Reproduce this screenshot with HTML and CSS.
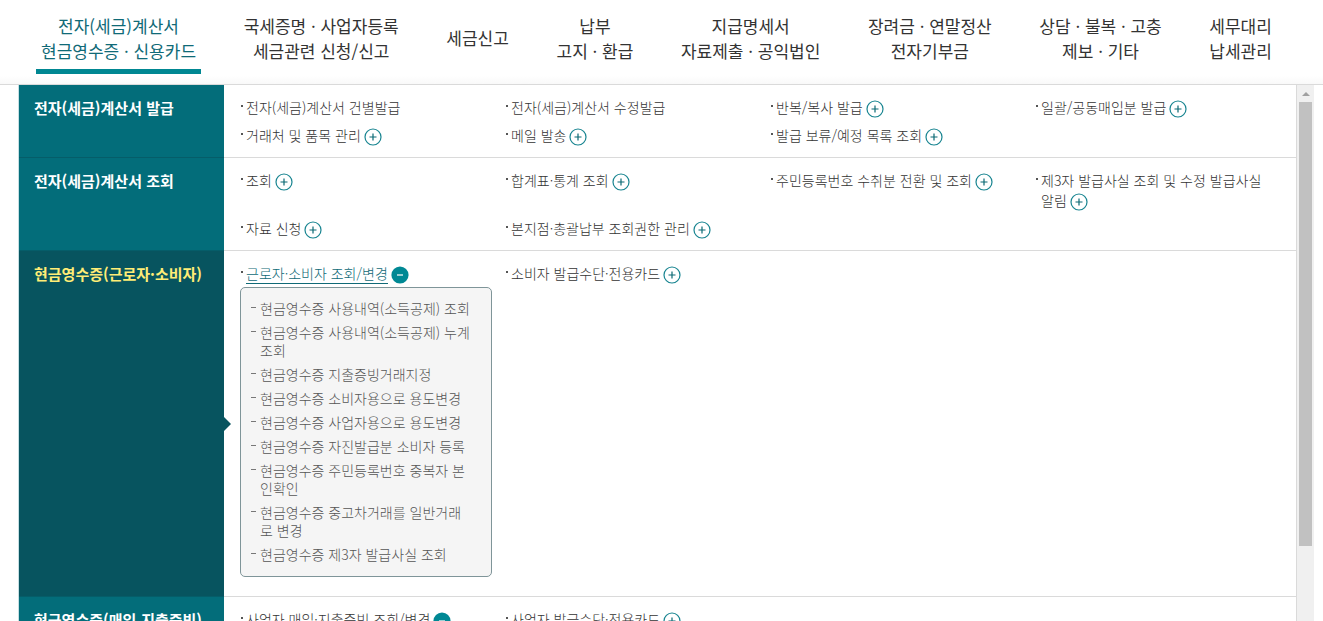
FILE: index.html
```html
<!DOCTYPE html>
<html lang="ko">
<head>
    <meta charset="UTF-8">
    <meta name="viewport" content="width=device-width, initial-scale=1.0">
    <title>전체메뉴</title>
    <link rel="stylesheet" href="styles.css">
</head>
<body>
    <svg class="symbols" aria-hidden="true">
        <symbol id="plus" viewBox="0 0 18 18">
            <circle cx="9" cy="9" r="8" fill="#fff" stroke="#178490" stroke-width="1.2"/>
            <path d="M5.5 9h7M9 5.5v7" stroke="#0b6974" stroke-width="1.2"/>
        </symbol>
        <symbol id="minus" viewBox="0 0 18 18">
            <circle cx="9" cy="9" r="8.6" fill="#008894"/>
            <path d="M6 9h6" stroke="#fff" stroke-width="1.2"/>
        </symbol>
    </svg>

    <nav class="gnb">
        <a class="active" href="#">전자(세금)계산서<br>현금영수증 · 신용카드</a>
        <a href="#">국세증명 · 사업자등록<br>세금관련 신청/신고</a>
        <a href="#">세금신고</a>
        <a href="#">납부<br>고지 · 환급</a>
        <a href="#">지급명세서<br>자료제출 · 공익법인</a>
        <a href="#">장려금 · 연말정산<br>전자기부금</a>
        <a href="#">상담 · 불복 · 고충<br>제보 · 기타</a>
        <a href="#">세무대리<br>납세관리</a>
    </nav>

    <div class="panel">
        <div class="menu">
            <section class="row">
                <h2>전자(세금)계산서 발급</h2>
                <ul class="items">
                    <li><a href="#">전자(세금)계산서 건별발급</a></li>
                    <li><a href="#">전자(세금)계산서 수정발급</a></li>
                    <li><a href="#">반복/복사 발급</a><button aria-label="펼치기"><svg><use href="#plus"/></svg></button></li>
                    <li><a href="#">일괄/공동매입분 발급</a><button aria-label="펼치기"><svg><use href="#plus"/></svg></button></li>
                    <li><a href="#">거래처 및 품목 관리</a><button aria-label="펼치기"><svg><use href="#plus"/></svg></button></li>
                    <li><a href="#">메일 발송</a><button aria-label="펼치기"><svg><use href="#plus"/></svg></button></li>
                    <li><a href="#">발급 보류/예정 목록 조회</a><button aria-label="펼치기"><svg><use href="#plus"/></svg></button></li>
                </ul>
            </section>
            <section class="row">
                <h2>전자(세금)계산서 조회</h2>
                <ul class="items">
                    <li><a href="#">조회</a><button aria-label="펼치기"><svg><use href="#plus"/></svg></button></li>
                    <li><a href="#">합계표·통계 조회</a><button aria-label="펼치기"><svg><use href="#plus"/></svg></button></li>
                    <li><a href="#">주민등록번호 수취분 전환 및 조회</a><button aria-label="펼치기"><svg><use href="#plus"/></svg></button></li>
                    <li><a href="#">제3자 발급사실 조회 및 수정 발급사실 알림</a><button aria-label="펼치기"><svg><use href="#plus"/></svg></button></li>
                    <li><a href="#">자료 신청</a><button aria-label="펼치기"><svg><use href="#plus"/></svg></button></li>
                    <li><a href="#">본지점·총괄납부 조회권한 관리</a><button aria-label="펼치기"><svg><use href="#plus"/></svg></button></li>
                </ul>
            </section>
            <section class="row current">
                <h2>현금영수증(근로자·소비자)</h2>
                <ul class="items">
                    <li>
                        <a class="on" href="#">근로자·소비자 조회/변경</a><button aria-label="접기"><svg><use href="#minus"/></svg></button>
                        <ul class="sub">
                            <li><a href="#">현금영수증 사용내역(소득공제) 조회</a></li>
                            <li><a href="#">현금영수증 사용내역(소득공제) 누계조회</a></li>
                            <li><a href="#">현금영수증 지출증빙거래지정</a></li>
                            <li><a href="#">현금영수증 소비자용으로 용도변경</a></li>
                            <li><a href="#">현금영수증 사업자용으로 용도변경</a></li>
                            <li><a href="#">현금영수증 자진발급분 소비자 등록</a></li>
                            <li><a href="#">현금영수증 주민등록번호 중복자 본인확인</a></li>
                            <li><a href="#">현금영수증 중고차거래를 일반거래로 변경</a></li>
                            <li><a href="#">현금영수증 제3자 발급사실 조회</a></li>
                        </ul>
                    </li>
                    <li><a href="#">소비자 발급수단·전용카드</a><button aria-label="펼치기"><svg><use href="#plus"/></svg></button></li>
                </ul>
            </section>
            <section class="row">
                <h2>현금영수증(매입.지출증빙)</h2>
                <ul class="items">
                    <li><a href="#">사업자 매입·지출증빙 조회/변경</a><button aria-label="접기"><svg><use href="#minus"/></svg></button></li>
                    <li><a href="#">사업자 발급수단·전용카드</a><button aria-label="펼치기"><svg><use href="#plus"/></svg></button></li>
                </ul>
            </section>
        </div>
        <div class="scrollbar">
            <span class="arrow"></span>
            <span class="thumb"></span>
        </div>
    </div>
</body>
</html>
```
FILE: styles.css
```css
* {
    box-sizing: border-box;
}
body {
    margin: 0;
    height: 100vh;
    display: flex;
    flex-direction: column;
    overflow: hidden;
    background: #fff;
    color: #333;
    font-family: "Noto Sans CJK KR", sans-serif;
    font-size: 14px;
    line-height: 20px;
}
ul {
    list-style: none;
    margin: 0;
    padding: 0;
}
a {
    color: inherit;
    text-decoration: none;
}
.symbols {
    position: absolute;
    width: 0;
    height: 0;
}

/* top navigation */
.gnb {
    display: flex;
    flex: none;
    justify-content: space-between;
    align-items: center;
    height: 85px;
    padding: 0 46px 6px 36px;
    border-bottom: 1px solid #dadada;
    background: linear-gradient(#fff 90%, #f9f9f9);
}
.gnb a {
    padding: 8px 5px 6px;
    border-bottom: 5px solid transparent;
    font-size: 17px;
    font-weight: 400;
    line-height: 25px;
    text-align: center;
    white-space: nowrap;
}
.gnb a.active {
    color: #106a77;
    border-color: #008792;
}

/* menu panel */
.panel {
    display: flex;
    flex: 1;
    min-height: 0;
    margin: 0 9px 0 18px;
    border-left: 1px solid #c5dfe3;
}
.menu {
    flex: 1;
    overflow: hidden;
    border-right: 1px solid #dadada;
}
.row {
    display: flex;
    border-bottom: 1px solid #dadada;
}
.row h2 {
    position: relative;
    flex: none;
    width: 205px;
    margin: 0 0 -1px;
    padding: 11px 0 0 15px;
    border-bottom: 1px solid #055d69;
    background: #036d7a;
    color: #fff;
    font-size: 15px;
    font-weight: 700;
    line-height: 24px;
    white-space: nowrap;
}
.row.current h2 {
    background: #07545f;
    color: #ffed76;
}
.row.current h2::after {
    content: "";
    position: absolute;
    top: 50%;
    right: -7px;
    margin-top: -7px;
    border: 7px solid transparent;
    border-left-color: #07545f;
    border-right: 0;
}
.items {
    flex: 1;
    display: grid;
    grid-template-columns: repeat(4, 1fr);
    gap: 8px 0;
    margin-right: -4px;
    padding: 12px 0 12px 16px;
    font-weight: 300;
    word-break: keep-all;
}
.items > li {
    position: relative;
    padding: 0 13px 0 6px;
}
.items > li::before {
    content: "";
    position: absolute;
    top: 8px;
    left: 1px;
    width: 2px;
    height: 2px;
    background: #555;
}
.items a.on {
    color: #106a77;
    border-bottom: 1px solid #106a77;
}
.items button {
    width: 18px;
    height: 18px;
    margin: -4px 0 -4px 3px;
    padding: 0;
    border: 0;
    background: none;
    vertical-align: -5px;
    cursor: pointer;
}
.items svg {
    display: block;
    width: 18px;
    height: 18px;
}
.sub {
    margin: 4px 0 7px -6px;
    padding: 11px 19px 13px 10px;
    display: grid;
    gap: 6px;
    border: 1px solid #7f9599;
    border-radius: 5px;
    background: #f5f5f5;
    color: #555;
    line-height: 18px;
    word-break: normal;
}
.sub li {
    position: relative;
    padding-left: 9px;
}
.sub li::before {
    content: "";
    position: absolute;
    top: 8px;
    left: 0;
    width: 5px;
    height: 1px;
    background: #777;
}

/* scrollbar */
.scrollbar {
    flex: none;
    width: 17px;
    padding: 7px 2px 0;
    background: #f0f0f0;
}
.scrollbar .arrow {
    display: block;
    width: 8px;
    margin: 0 auto 6px;
    border: 4px solid transparent;
    border-top: 0;
    border-bottom-color: #a0a0a0;
}
.scrollbar .thumb {
    display: block;
    height: 84%;
    background: #c1c1c1;
}
```
